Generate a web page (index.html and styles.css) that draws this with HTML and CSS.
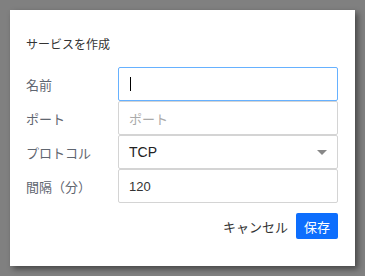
FILE: index.html
```html
<!DOCTYPE html>
<html lang="ja">
<head>
    <meta charset="UTF-8">
    <meta name="viewport" content="width=device-width, initial-scale=1.0">
    <title>サービスを作成</title>
    <link rel="stylesheet" href="styles.css">
</head>
<body>
    <div class="dialog">
        <h2 class="title">サービスを作成</h2>
        <form class="form">
            <div class="row">
                <label class="label">名前</label>
                <div class="field focused"><span class="caret"></span></div>
            </div>
            <div class="row">
                <label class="label">ポート</label>
                <div class="field placeholder">ポート</div>
            </div>
            <div class="row">
                <label class="label">プロトコル</label>
                <div class="field select">TCP<span class="arrow"></span></div>
            </div>
            <div class="row">
                <label class="label">間隔（分）</label>
                <div class="field">120</div>
            </div>
        </form>
        <div class="actions">
            <button type="button" class="btn-cancel">キャンセル</button>
            <button type="button" class="btn-save">保存</button>
        </div>
    </div>
</body>
</html>
```
FILE: styles.css
```css
body {
    margin: 0;
    font-family: 'Liberation Sans', 'Noto Sans CJK JP', sans-serif;
    background-color: #808080;
    height: 276px;
    padding: 10px 0 0 10px;
    box-sizing: border-box;
}
.dialog {
    width: 345px;
    height: 256px;
    background-color: #ffffff;
    box-shadow: 3px 3px 6px rgba(0, 0, 0, 0.45);
    padding: 27px 17px 0 16px;
    box-sizing: border-box;
}
.title {
    margin: 0 0 13px 0;
    font-size: 12px;
    font-weight: normal;
    color: #333;
    line-height: 17px;
}
.row {
    display: flex;
    align-items: center;
}
.label {
    width: 92px;
    font-size: 13px;
    color: #5f6670;
}
.field {
    flex: 1;
    height: 34px;
    border: 1px solid #d4d4d4;
    border-radius: 2px;
    box-sizing: border-box;
    display: flex;
    align-items: center;
    padding-left: 10px;
    font-size: 13px;
    color: #333;
    position: relative;
}
.focused {
    border-color: #66b1ff;
}
.caret {
    width: 1px;
    height: 14px;
    background-color: #000;
    margin-left: 1px;
}
.placeholder {
    color: #aaa;
}
.select {
    font-size: 14px;
    color: #222;
}
.arrow {
    position: absolute;
    right: 10px;
    top: 14px;
    border-left: 5px solid transparent;
    border-right: 5px solid transparent;
    border-top: 5px solid #888;
}
.actions {
    display: flex;
    justify-content: flex-end;
    align-items: center;
    margin-top: 10px;
    gap: 8px;
}
.btn-cancel {
    background: none;
    border: none;
    padding: 0;
    font-family: inherit;
    font-size: 13px;
    color: #333;
}
.btn-save {
    background-color: #0d6efd;
    color: #fff;
    border: none;
    border-radius: 2px;
    width: 42px;
    height: 26px;
    font-family: inherit;
    font-size: 13px;
    padding: 0;
}
```
